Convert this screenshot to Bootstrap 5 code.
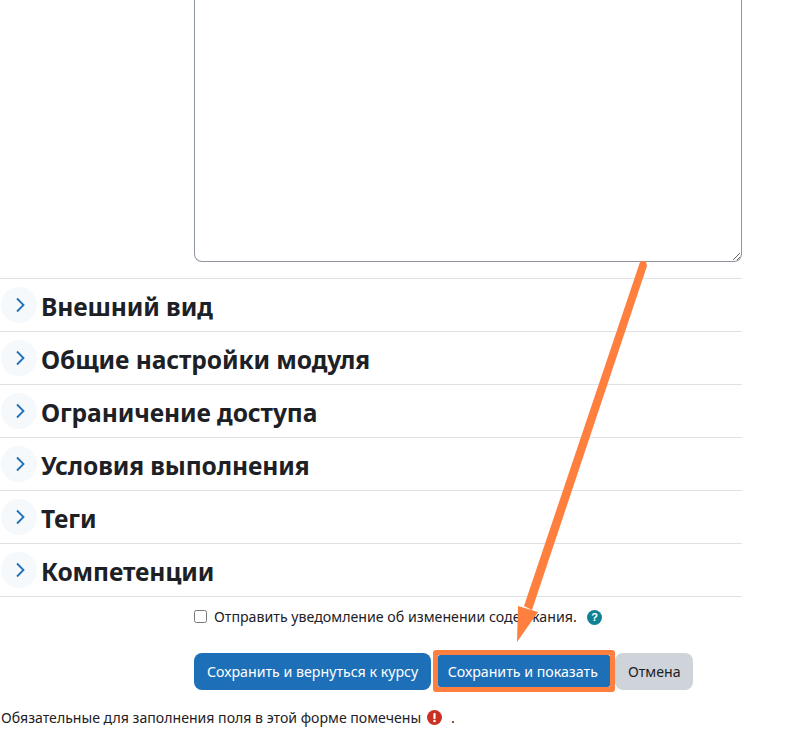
<!DOCTYPE html>
<html lang="ru">
<head>
<meta charset="utf-8">
<title>Форма</title>
<link href="https://cdn.jsdelivr.net/npm/bootstrap@5.3.0/dist/css/bootstrap.min.css" rel="stylesheet">
<style>
html,body{height:740px;overflow:hidden;}
body{font-family:"Noto Sans","Open Sans",sans-serif;font-size:14.2px;color:#1d2125;background:#fff;position:relative;}
.pg-form{width:742px;}
.area-row{padding-left:194px;height:278px;padding-bottom:16px;}
.area-box{display:block;width:100%;height:100%;border:1px solid #8f959e;border-radius:0 0 8px 8px;border-top:0;margin:0;resize:both;background:#fff;}
.sect-row{height:53px;border-top:1px solid #dee2e6;}
.sect-bottom{border-top:1px solid #dee2e6;}
.tog-circle{width:36px;height:36px;background:#f5f9fc;margin-top:8px;margin-left:1px;padding-left:2px;}
.sect-title{font-size:24.6px;font-weight:700;line-height:28px;margin:0 0 0 4px;padding-top:14px;color:#1d2125;letter-spacing:-.1px;}
.notify-row{padding-left:194px;height:53px;padding-top:10px;line-height:20px;}
.notify-check{width:13px;height:13px;border:1px solid #767676;border-radius:2.5px;margin:3px 7px 0 0;flex:none;}
.help-dot{width:15px;height:15px;margin:3px 0 0 10px;}
.btn-row{padding-left:194px;height:55px;}
.pg-btn{font-size:14.2px;height:37px;padding:0 13px;border-radius:8px;line-height:37px;border:0;white-space:nowrap;}
.pg-primary{background:#1d70b8;color:#fff;}
.pg-primary:hover{background:#1d70b8;color:#fff;}
.pg-second{background:#ced4da;color:#1d2125;width:78px;padding:0;margin-top:3px;}
.btn-first{margin-top:3px;}
.hl-wrap{border:5px solid #ff7f3f;border-radius:3px;margin-left:2px;height:42px;width:182px;}
.hl-wrap .pg-btn{height:32px;line-height:31px;border-radius:2px;width:172px;padding:0 3px 0 0;}
.req-row{padding-left:1px;line-height:20px;height:24px;padding-top:1px;font-size:14.1px;}
.arrow-layer{position:absolute;left:0;top:0;pointer-events:none;}
.dot-after{margin-left:9px;}
.alert-dot{width:15px;height:15px;margin-left:6px;}
</style>
</head>
<body>
<form class="pg-form">
  <div class="area-row"><textarea class="area-box"></textarea></div>
  <div class="sect-row d-flex align-items-start">
    <span class="tog-circle rounded-circle d-flex align-items-center justify-content-center"><svg width="12" height="16" viewBox="0 0 12 16"><path d="M3 1.5 9.5 8 3 14.5" fill="none" stroke="#1d70b8" stroke-width="1.8"/></svg></span>
    <h3 class="sect-title">Внешний вид</h3>
  </div>
  <div class="sect-row d-flex align-items-start">
    <span class="tog-circle rounded-circle d-flex align-items-center justify-content-center"><svg width="12" height="16" viewBox="0 0 12 16"><path d="M3 1.5 9.5 8 3 14.5" fill="none" stroke="#1d70b8" stroke-width="1.8"/></svg></span>
    <h3 class="sect-title">Общие настройки модуля</h3>
  </div>
  <div class="sect-row d-flex align-items-start">
    <span class="tog-circle rounded-circle d-flex align-items-center justify-content-center"><svg width="12" height="16" viewBox="0 0 12 16"><path d="M3 1.5 9.5 8 3 14.5" fill="none" stroke="#1d70b8" stroke-width="1.8"/></svg></span>
    <h3 class="sect-title">Ограничение доступа</h3>
  </div>
  <div class="sect-row d-flex align-items-start">
    <span class="tog-circle rounded-circle d-flex align-items-center justify-content-center"><svg width="12" height="16" viewBox="0 0 12 16"><path d="M3 1.5 9.5 8 3 14.5" fill="none" stroke="#1d70b8" stroke-width="1.8"/></svg></span>
    <h3 class="sect-title">Условия выполнения</h3>
  </div>
  <div class="sect-row d-flex align-items-start">
    <span class="tog-circle rounded-circle d-flex align-items-center justify-content-center"><svg width="12" height="16" viewBox="0 0 12 16"><path d="M3 1.5 9.5 8 3 14.5" fill="none" stroke="#1d70b8" stroke-width="1.8"/></svg></span>
    <h3 class="sect-title">Теги</h3>
  </div>
  <div class="sect-row d-flex align-items-start">
    <span class="tog-circle rounded-circle d-flex align-items-center justify-content-center"><svg width="12" height="16" viewBox="0 0 12 16"><path d="M3 1.5 9.5 8 3 14.5" fill="none" stroke="#1d70b8" stroke-width="1.8"/></svg></span>
    <h3 class="sect-title">Компетенции</h3>
  </div>
  <div class="sect-bottom"></div>
  <div class="notify-row d-flex align-items-start">
    <input type="checkbox" class="notify-check">
    <span>Отправить уведомление об изменении содержания.</span>
    <span class="help-dot rounded-circle d-inline-flex"><svg width="15" height="15" viewBox="0 0 15 15"><circle cx="7.5" cy="7.5" r="7.5" fill="#0f8294"/><text x="7.5" y="11.3" text-anchor="middle" font-size="11" font-weight="700" fill="#fff" font-family="Liberation Sans, sans-serif">?</text></svg></span>
  </div>
  <div class="btn-row d-flex align-items-start">
    <button type="button" class="btn pg-btn pg-primary btn-first">Сохранить и вернуться к курсу</button>
    <span class="hl-wrap d-inline-flex"><button type="button" class="btn pg-btn pg-primary">Сохранить и показать</button></span>
    <button type="button" class="btn pg-btn pg-second">Отмена</button>
  </div>
  <div class="req-row d-flex align-items-center">
    <span>Обязательные для заполнения поля в этой форме помечены</span>
    <span class="alert-dot rounded-circle d-inline-flex"><svg width="15" height="15" viewBox="0 0 15 15"><circle cx="7.5" cy="7.5" r="7.5" fill="#ca3120"/><rect x="6.4" y="3" width="2.2" height="6" rx=".8" fill="#fff"/><circle cx="7.5" cy="11" r="1.3" fill="#fff"/></svg></span>
    <span class="dot-after">.</span>
  </div>
</form>
<svg class="arrow-layer" width="787" height="740" viewBox="0 0 787 740">
  <path d="M640 262Q643 260 646 262L647 266 532 610 524 606Z" fill="#ff7f3f"/>
  <path d="M518 606 538 612 517 642Z" fill="#ff7f3f"/>
</svg>
</body>
</html>
